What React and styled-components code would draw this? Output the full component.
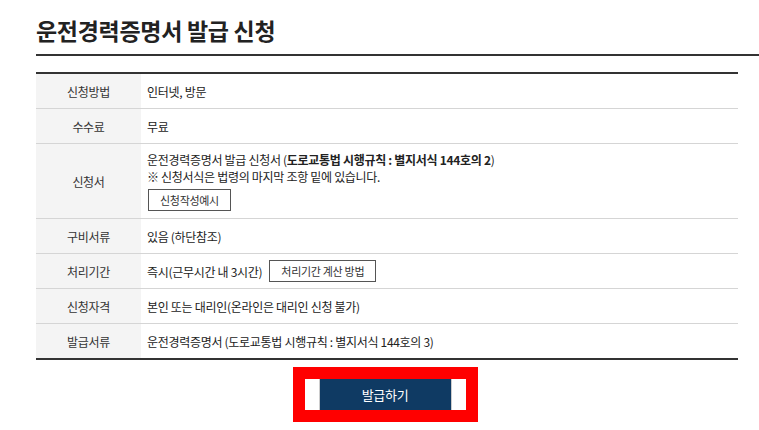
import React from 'react';
import styled, { createGlobalStyle } from 'styled-components';

const GlobalStyle = createGlobalStyle`
  body {
    margin: 0;
    background: #fff;
    font-family: "Noto Sans CJK KR", "Noto Sans", sans-serif;
    color: #333;
  }
`;

const Page = styled.div`
  padding: 15px 0 0 36px;
`;

const Title = styled.h2`
  margin: 0;
  padding-bottom: 9px;
  font-size: 23px;
  font-weight: 700;
  letter-spacing: -0.3px;
  color: #222;
  border-bottom: 2px solid #333;
  line-height: 30px;
`;

const Table = styled.div`
  margin: 16px 21px 0 0;
  border-top: 2px solid #333;
  border-bottom: 2px solid #333;
  font-size: 12px;
  letter-spacing: -0.3px;
`;

const Row = styled.div`
  display: grid;
  grid-template-columns: 105px 1fr;
  min-height: 34px;
  border-top: ${({ first }) => (first ? 'none' : '1px solid #d5d5d5')};
`;

const Label = styled.div`
  background: #f4f4f4;
  display: flex;
  align-items: center;
  justify-content: center;
  color: #333;
`;

const Value = styled.div`
  display: flex;
  flex-direction: ${({ column }) => (column ? 'column' : 'row')};
  align-items: ${({ column }) => (column ? 'flex-start' : 'center')};
  justify-content: ${({ column }) => (column ? 'center' : 'flex-start')};
  padding: ${({ column }) => (column ? '7px 0 7px 6px' : '0 0 0 6px')};
  color: #222;
  line-height: 17px;
`;

const Line = styled.span``;

const Strong = styled.b`
  font-weight: 700;
`;

const SmallButton = styled.button`
  font-family: inherit;
  font-size: 11px;
  letter-spacing: -0.3px;
  color: #333;
  background: #fff;
  border: 1px solid #555;
  height: 22px;
  padding: 0 11px;
  margin: ${({ inline }) => (inline ? '0 0 0 7px' : '4px 0 0 1px')};
  cursor: pointer;
`;

const Actions = styled.div`
  display: flex;
  justify-content: center;
  padding-top: 7px;
  margin-right: 25px;
`;

const Highlight = styled.div`
  border: 12px solid #ff0000;
  background: #fff;
  padding: 0 14px;
`;

const SubmitButton = styled.button`
  display: block;
  width: 133px;
  height: 31px;
  background: #0f3a63;
  color: #fff;
  font-family: inherit;
  font-size: 13px;
  letter-spacing: -0.3px;
  border: none;
  border-left: 1px solid #ccc;
  border-right: 1px solid #ccc;
  cursor: pointer;
`;

const rows = [
  { label: '신청방법', value: '인터넷, 방문' },
  { label: '수수료', value: '무료' },
];

const App = () => (
  <Page>
    <GlobalStyle />
    <Title>운전경력증명서 발급 신청</Title>
    <Table>
      {rows.map((r, i) => (
        <Row key={r.label} first={i === 0}>
          <Label>{r.label}</Label>
          <Value>{r.value}</Value>
        </Row>
      ))}
      <Row>
        <Label>신청서</Label>
        <Value column>
          <Line>
            운전경력증명서 발급 신청서 (<Strong>도로교통법 시행규칙 : 별지서식 144호의 2</Strong>)
          </Line>
          <Line>※ 신청서식은 법령의 마지막 조항 밑에 있습니다.</Line>
          <SmallButton>신청작성예시</SmallButton>
        </Value>
      </Row>
      <Row>
        <Label>구비서류</Label>
        <Value>있음 (하단참조)</Value>
      </Row>
      <Row>
        <Label>처리기간</Label>
        <Value>
          즉시(근무시간 내 3시간)
          <SmallButton inline>처리기간 계산 방법</SmallButton>
        </Value>
      </Row>
      <Row>
        <Label>신청자격</Label>
        <Value>본인 또는 대리인(온라인은 대리인 신청 불가)</Value>
      </Row>
      <Row>
        <Label>발급서류</Label>
        <Value>운전경력증명서 (도로교통법 시행규칙 : 별지서식 144호의 3)</Value>
      </Row>
    </Table>
    <Actions>
      <Highlight>
        <SubmitButton>발급하기</SubmitButton>
      </Highlight>
    </Actions>
  </Page>
);

export default App;
